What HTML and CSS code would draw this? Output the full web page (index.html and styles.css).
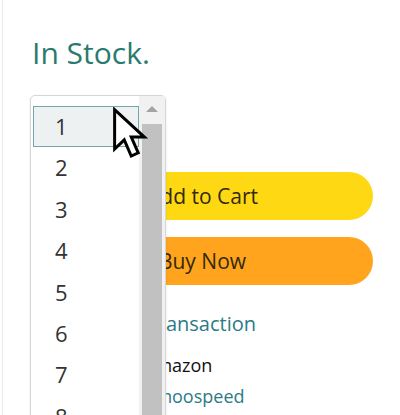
FILE: index.html
```html
<!DOCTYPE html>
<html lang="en">

<head>
    <meta charset="UTF-8">
    <meta name="viewport" content="width=device-width, initial-scale=1.0">
    <title>Buy Box</title>
    <link rel="stylesheet" href="styles.css">
</head>

<body>
    <div id="buyBox">
        <div class="stock">In Stock.</div>

        <!-- quantity select, the open list sits over it -->
        <div class="qty-select">Qty: 1</div>

        <div class="btn btn-cart">Add to Cart</div>
        <div class="btn btn-buy">Buy Now</div>

        <div class="secure">
            <svg width="14" height="16" viewBox="0 0 14 16">
                <rect x="1" y="7" width="12" height="8" rx="1" fill="#888"></rect>
                <path d="M3.5 7V5a3.5 3.5 0 0 1 7 0v2" fill="none" stroke="#888" stroke-width="1.6"></path>
            </svg>
            <span>Secure transaction</span>
        </div>

        <div class="info-row first">
            <span class="label">Ships from</span>
            <span class="value">Amazon</span>
        </div>
        <div class="info-row">
            <span class="label">Sold by</span>
            <span class="value link">Amoospeed</span>
        </div>

        <div class="qty-list">
            <ul class="options">
                <li class="selected">1</li>
                <li>2</li>
                <li>3</li>
                <li>4</li>
                <li>5</li>
                <li>6</li>
                <li>7</li>
                <li>8</li>
            </ul>
            <div class="scrollbar">
                <div class="arrow"></div>
                <div class="thumb"></div>
            </div>
        </div>

        <svg class="cursor" width="42" height="56" viewBox="0 0 24 32">
            <path d="M1.5 1.5 L1.5 24 L7 18.8 L11 28 L15 26.2 L11 17.2 L18.5 17.2 Z" fill="#fff" stroke="#000" stroke-width="1.7" stroke-linejoin="miter"></path>
        </svg>
    </div>
</body>

</html>
```

FILE: styles.css
```css
body {
    font-family: "Open Sans", "Noto Sans", sans-serif;
    margin: 0;
    padding: 0;
    background-color: #fff;
    overflow: hidden;
}

#buyBox {
    position: relative;
    height: 415px;
    box-sizing: border-box;
    margin-left: 2px;
    border-left: 1px solid #ececec;
    padding: 33px 27px 0 29px;
}

.stock {
    font-size: 30px;
    color: #2b7a6f;
    line-height: 40px;
}

.qty-select {
    margin-top: 24px;
    height: 34px;
    width: 90px;
    border: 1px solid #d5d9d9;
    border-radius: 8px;
    background-color: #f0f2f2;
    font-size: 15px;
    line-height: 34px;
    padding-left: 10px;
}

.btn {
    height: 48px;
    border-radius: 24px;
    font-size: 21px;
    line-height: 48px;
    text-align: center;
    color: #33290d;
}

.btn-cart {
    margin-top: 39px;
    background-color: #ffd814;
}

.btn-buy {
    margin-top: 17px;
    background-color: #ffa41c;
}

.secure {
    display: flex;
    align-items: center;
    gap: 8px;
    margin-top: 25px;
    padding-left: 28px;
    font-size: 20px;
    color: #2a7b86;
}

.info-row {
    display: flex;
    font-size: 18px;
    line-height: 31px;
}

.info-row.first {
    margin-top: 13px;
}

.info-row .label {
    width: 112px;
    color: #565959;
}

.info-row .value {
    color: #0f1111;
}

.info-row .link {
    color: #2a7b86;
}

/* open list of the quantity select */
.qty-list {
    position: absolute;
    left: 27px;
    top: 95px;
    width: 134px;
    height: 340px;
    display: flex;
    border: 1px solid #d6d6d6;
    border-radius: 5px;
    background-color: #fff;
    box-shadow: 0 1px 3px rgba(0, 0, 0, 0.08);
}

.options {
    list-style: none;
    margin: 0;
    padding: 10px 0 0 2px;
    width: 108px;
}

.options li {
    height: 41.4px;
    line-height: 41.4px;
    padding-left: 22px;
    font-size: 22px;
    color: #333;
    box-sizing: border-box;
}

.options li.selected {
    border: 1px solid #74a6ad;
    background-color: #eef1f2;
    line-height: 39px;
    padding-left: 21px;
}

.scrollbar {
    width: 26px;
    background-color: #f1f1f1;
    display: flex;
    flex-direction: column;
    align-items: center;
}

.arrow {
    margin-top: 10px;
    width: 0;
    height: 0;
    border-left: 6px solid transparent;
    border-right: 6px solid transparent;
    border-bottom: 6px solid #a3a3a3;
}

.thumb {
    margin-top: 12px;
    width: 20px;
    flex: 1;
    background-color: #c1c1c1;
}

.cursor {
    position: absolute;
    left: 109px;
    top: 107px;
}
```
